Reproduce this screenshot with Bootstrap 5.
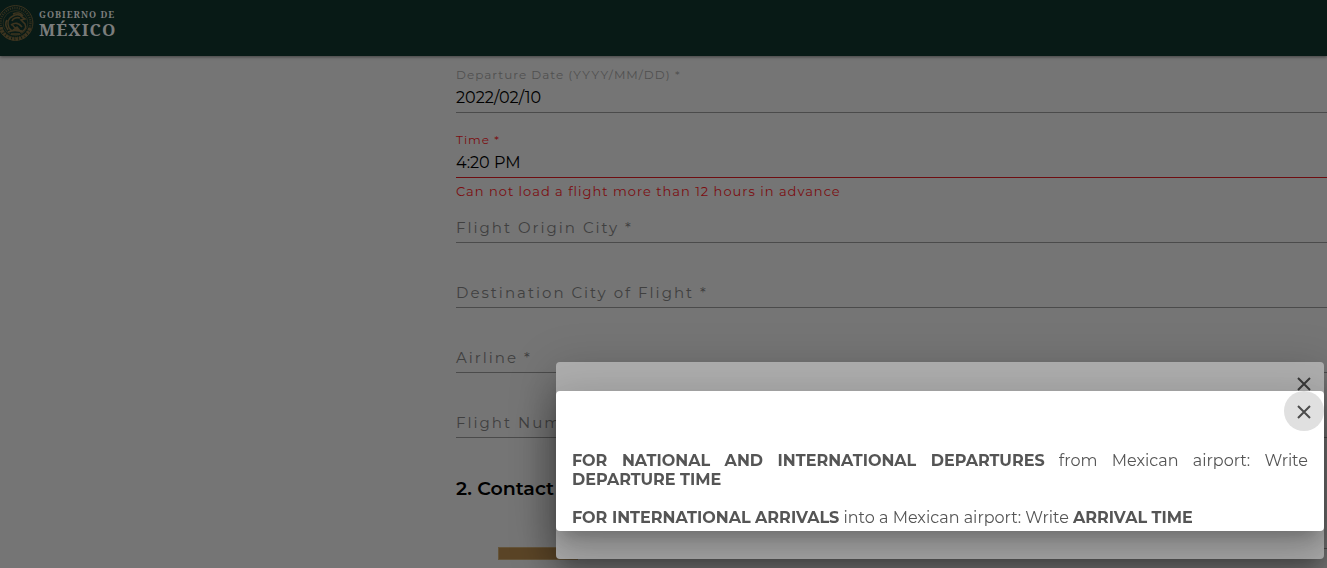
<!DOCTYPE html>
<html lang="en">
<head>
<meta charset="utf-8">
<meta name="viewport" content="width=device-width, initial-scale=1">
<title>Gobierno de México</title>
<link rel="stylesheet" href="https://cdn.jsdelivr.net/npm/bootstrap@5.3.0/dist/css/bootstrap.min.css">
<style>
body { background: #757575; font-family: Montserrat, Inter, sans-serif; color: #000; height: 100vh; overflow: hidden; }
.gob-bar { background: #081a16; height: 56px; box-shadow: 0 1px 3px rgba(0,0,0,.45); }
.gob-brand { gap: 4px; height: 46px; color: #7b7d7c; font-family: "Noto Serif", "Liberation Serif", serif; font-weight: 700; }
.gob-top { font-size: 9px; line-height: 13px; letter-spacing: 1px; }
.gob-name { font-size: 17px; line-height: 17px; letter-spacing: 1px; }
.form-pane { margin-left: 456px; padding-top: 9px; }
.mat-field { height: 65px; }
.mat-field label { font-size: 12px; line-height: 20px; letter-spacing: 1px; color: #505050; }
.mat-field input { flex-shrink: 0; border: 0; border-bottom: 1px solid #4b4b4b; border-radius: 0; background: transparent; padding: 0 0 3px; height: 28px; font-size: 16px; line-height: 24px; color: #000; outline: 0; }
.mat-field.empty-field input { margin-top: 20px; }
.mat-field.empty-field label { position: absolute; top: 21px; left: 0; font-size: 15px; letter-spacing: 2px; line-height: 24px; color: #404040; }
.mat-field.bad-field label, .field-error { color: #7c0d10; }
.mat-field.bad-field input { border-color: #6e0d10; }
.field-error { font-size: 13px; line-height: 16px; letter-spacing: 1px; padding-top: 5px; }
.section-title { font-size: 19px; line-height: 24px; font-weight: 600; margin: 22px 0 46px; }
.gold-bar { width: 80px; height: 13px; margin-left: 42px; background: #5a4426; border: 1px solid #64543a; }
.phone-line { border: 0; border-bottom: 1px solid #4b4b4b; background: transparent; height: 2px; padding: 0; margin-left: 60px; outline: 0; }
.dialog-back { right: 3px; bottom: 9px; width: 768px; max-width: 100%; padding: 29px 0 28px; border-radius: 4px; background: #adadad; }
.dialog-back, .dialog-front { box-shadow: 0 11px 15px -7px rgba(0,0,0,.2), 0 24px 38px 3px rgba(0,0,0,.14), 0 9px 46px 8px rgba(0,0,0,.12); }
.dialog-front { min-height: 140px; padding: 60px 16px 4px; border-radius: 4px; background: #fff; color: #555; font-size: 16px; line-height: 19px; text-align: justify; }
.dialog-front p { margin: 0; }
.dialog-front p + p { margin-top: 19px; }
.close-round { position: absolute; top: 0; right: 0; width: 40px; height: 40px; border: 0; border-radius: 50%; padding: 2px 0 0; background: #e0e0e0; color: #4c4c4c; }
.close-under { top: 1px; background: transparent; color: #393939; }
</style>
<script src="https://cdn.jsdelivr.net/npm/bootstrap@5.3.0/dist/js/bootstrap.bundle.min.js"></script>
</head>
<body>
<header class="gob-bar">
  <a href="#" class="gob-brand d-inline-flex align-items-center text-decoration-none">
    <svg width="35" height="46" viewBox="0 0 35 46" fill="none" stroke="#3d341f" aria-hidden="true">
      <circle cx="15.5" cy="23" r="17.4" stroke-width="1"/>
      <circle cx="15.5" cy="23" r="15" stroke-width="2.4" stroke-dasharray="1.2 1.1" opacity=".75"/>
      <circle cx="15.5" cy="23" r="12.4" stroke-width=".6"/>
      <path d="M1 27c1 7 7 12 14.500 12S29 34 30 27" stroke-width="3.400" stroke-dasharray="2.400 1"/>
      <path d="M9 28c-2-5-1-10 4-12 3-2 7-2 9 1l3 2-4 1 4 4c2 4-1 7-4 8l-4-5-5 4-3-3m3-7c1-3 5-4 8-3m-9 7c4-3 8-2 11 2m-10-3c2 4 5 6 10 7M7 20c-2 3-1 7 1 10m5-16c4-2 8-1 10 2M8 32c4-2 10-2 15 0m-12 2h9" stroke-width="1.600"/>
    </svg>
    <span><span class="gob-top d-block">GOBIERNO DE</span><span class="gob-name d-block">MÉXICO</span></span>
  </a>
</header>
<main class="form-pane">
  <form>
    <div class="mat-field d-flex flex-column"><label for="depDate">Departure Date (YYYY/MM/DD) *</label><input id="depDate" type="text" value="2022/02/10"></div>
    <div class="mat-field bad-field d-flex flex-column"><label for="depTime">Time *</label><input id="depTime" type="text" value="4:20 PM"><div class="field-error">Can not load a flight more than 12 hours in advance</div></div>
    <div class="mat-field empty-field position-relative d-flex flex-column"><label for="origin">Flight Origin City *</label><input id="origin" type="text"></div>
    <div class="mat-field empty-field position-relative d-flex flex-column"><label for="dest">Destination City of Flight *</label><input id="dest" type="text"></div>
    <div class="mat-field empty-field position-relative d-flex flex-column"><label for="airline">Airline *</label><input id="airline" type="text"></div>
    <div class="mat-field empty-field position-relative d-flex flex-column"><label for="number">Flight Number *</label><input id="number" type="text"></div>
    <h2 class="section-title">2. Contact</h2>
    <div class="d-flex"><div class="gold-bar flex-shrink-0"></div><input class="phone-line flex-grow-1" type="text" aria-label="Contact"></div>
  </form>
</main>
<div class="dialog-back position-fixed" role="dialog">
  <button type="button" class="close-round close-under d-flex align-items-center justify-content-center" aria-label="Close"><svg width="14" height="14" viewBox="0 0 14 14" stroke="currentColor" stroke-width="2"><path d="M1 1l12 12M13 1L1 13"/></svg></button>
  <div class="dialog-front position-relative">
    <button type="button" class="close-round d-flex align-items-center justify-content-center" aria-label="Close"><svg width="14" height="14" viewBox="0 0 14 14" stroke="currentColor" stroke-width="2"><path d="M1 1l12 12M13 1L1 13"/></svg></button>
    <p><b>FOR NATIONAL AND INTERNATIONAL DEPARTURES</b> from Mexican airport: Write <b>DEPARTURE TIME</b></p>
    <p><b>FOR INTERNATIONAL ARRIVALS</b> into a Mexican airport: Write <b>ARRIVAL TIME</b></p>
  </div>
</div>
</body>
</html>
